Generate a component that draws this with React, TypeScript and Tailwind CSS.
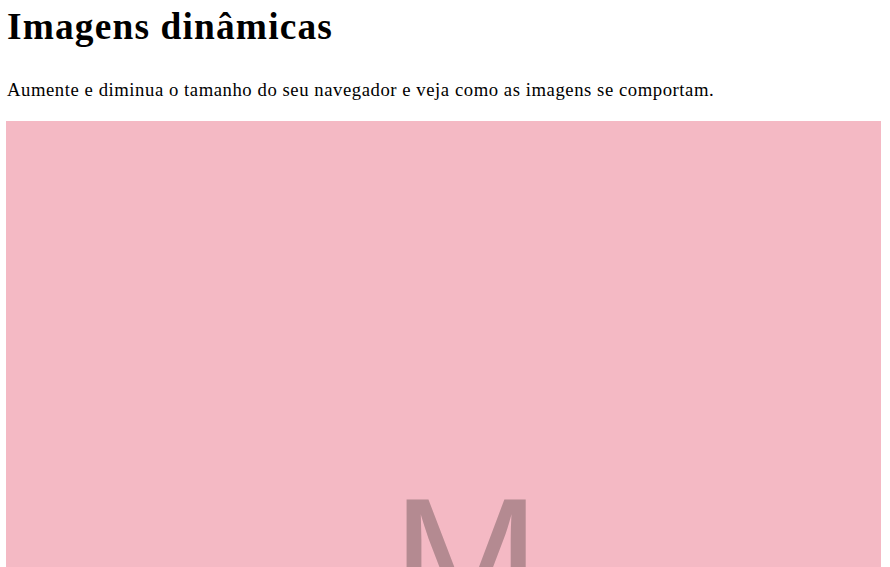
export default function App() {
  return (
    <div className="min-h-screen bg-white px-[6px] pt-[5px] text-black" style={{ fontFamily: '"Liberation Serif", "Times New Roman", serif' }}>
      <h1 className="text-[37.4px] font-bold leading-[1.15] pl-[1px] tracking-[1.15px]">Imagens dinâmicas</h1>
      <p className="mt-[31px] text-[18.7px] leading-[1.15] pl-[1px] tracking-[0.55px]">
        Aumente e diminua o tamanho do seu navegador e veja como as imagens se comportam.
      </p>
      <div className="mt-[20px] w-[875px] h-[500px] bg-[#f4b9c4] overflow-hidden">
        <div
          className="pl-[386px] pt-[351px] text-[178px] leading-none text-[#b48a91]"
          style={{ fontFamily: '"Liberation Sans", Arial, sans-serif' }}
        >
          M
        </div>
      </div>
    </div>
  )
}
